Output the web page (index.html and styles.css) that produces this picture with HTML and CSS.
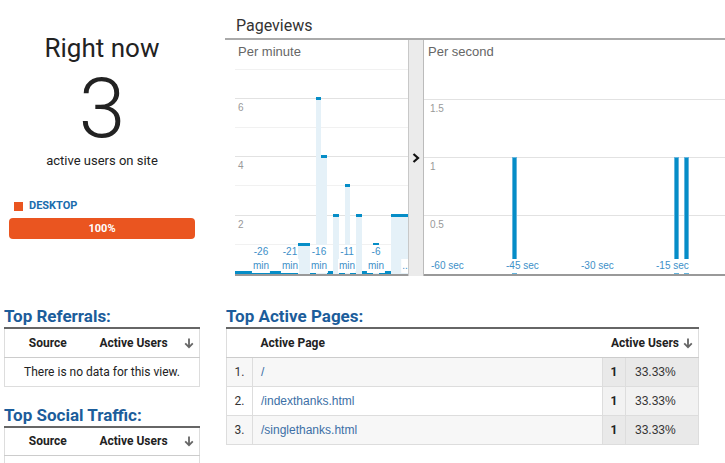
FILE: index.html
```html
<!DOCTYPE html>
<html>
<head>
<meta charset="utf-8">
<link rel="stylesheet" href="styles.css">
</head>
<body>
<div class="page">
  <div class="top">
    <div class="now">
      <div class="now-head">
        <div class="now-title">Right now</div>
        <div class="now-count">3</div>
        <div class="now-sub">active users on site</div>
      </div>
      <div class="legend"><span class="swatch"></span>DESKTOP</div>
      <div class="devbar">100%</div>
    </div>
    <div class="pv">
      <div class="pv-title">Pageviews</div>
      <div class="charts">
        <div class="chart minute">
          <div class="gl minor" style="bottom:29px"></div>
          <div class="gl" style="bottom:58px"><span>2</span></div>
          <div class="gl minor" style="bottom:88px"></div>
          <div class="gl" style="bottom:117px"><span>4</span></div>
          <div class="gl minor" style="bottom:146px"></div>
          <div class="gl" style="bottom:175px"><span>6</span></div>
          <div class="gl minor" style="bottom:204px"></div>
          <div class="chart-label">Per minute</div>
          <div class="bars">
            <div class="bar" style="height:3px"></div>
            <div class="bar" style="height:3px"></div>
            <div class="bar" style="height:3px"></div>
            <div class="bar" style="height:3px"></div>
            <div class="bar" style="height:3px"></div>
            <div class="bar" style="height:3px"></div>
            <div class="bar" style="height:3px"></div>
            <div class="bar" style="height:3px"></div>
            <div class="bar" style="height:3px"></div>
            <div class="bar" style="height:3px"></div>
            <div class="bar" style="height:3px"></div>
            <div class="bar" style="height:31px"></div>
            <div class="bar" style="height:31px"></div>
            <div class="bar" style="height:3px"></div>
            <div class="bar" style="height:177px"></div>
            <div class="bar" style="height:119px"></div>
            <div class="bar" style="height:3px"></div>
            <div class="bar" style="height:60px"></div>
            <div class="bar" style="height:3px"></div>
            <div class="bar" style="height:90px"></div>
            <div class="bar" style="height:3px"></div>
            <div class="bar" style="height:60px"></div>
            <div class="bar" style="height:3px"></div>
            <div class="bar" style="height:3px"></div>
            <div class="bar" style="height:31px"></div>
            <div class="bar" style="height:3px"></div>
            <div class="bar" style="height:3px"></div>
            <div class="bar" style="height:60px"></div>
            <div class="bar" style="height:60px"></div>
            <div class="bar" style="height:60px"></div>
          </div>
          <div class="xl" style="left:26px"><span>-26</span><span>min</span></div>
          <div class="xl" style="left:55px"><span>-21</span><span>min</span></div>
          <div class="xl" style="left:84px"><span>-16</span><span>min</span></div>
          <div class="xl" style="left:112px"><span>-11</span><span>min</span></div>
          <div class="xl" style="left:141px"><span>-6</span><span>min</span></div>
          <div class="xl" style="left:170px"><span>..</span></div>
        </div>
        <div class="sep">
          <svg width="8" height="10" viewBox="0 0 8 10"><polyline points="1.5,1 6,5 1.5,9" fill="none" stroke="#111" stroke-width="2.2"/></svg>
        </div>
        <div class="chart second">
          <div class="gl" style="bottom:58px"><span>0.5</span></div>
          <div class="gl" style="bottom:116px"><span>1</span></div>
          <div class="gl" style="bottom:174px"><span>1.5</span></div>
          <div class="chart-label">Per second</div>
          <div class="sb" style="left:88px"></div>
          <div class="sb" style="left:250px"></div>
          <div class="sb" style="left:260px"></div>
          <div class="xs" style="left:6px">-60 sec</div>
          <div class="xs" style="left:81px">-45 sec</div>
          <div class="xs" style="left:156px">-30 sec</div>
          <div class="xs" style="left:231px">-15 sec</div>
        </div>
      </div>
    </div>
  </div>

  <div class="bottom">
    <div class="side">
      <h2 class="heading">Top Referrals:</h2>
      <table class="tbl small">
        <tr>
          <th class="c-src">Source</th>
          <th class="c-au">Active Users</th>
          <th class="c-arr"><svg class="arrow" width="12" height="12" viewBox="0 0 12 12"><path d="M6 1.5V10M2.2 6.4L6 10.2 9.8 6.4" fill="none" stroke="#666" stroke-width="1.8"/></svg></th>
        </tr>
        <tr><td colspan="3" class="empty">There is no data for this view.</td></tr>
      </table>
      <h2 class="heading gap">Top Social Traffic:</h2>
      <table class="tbl small">
        <tr>
          <th class="c-src">Source</th>
          <th class="c-au">Active Users</th>
          <th class="c-arr"><svg class="arrow" width="12" height="12" viewBox="0 0 12 12"><path d="M6 1.5V10M2.2 6.4L6 10.2 9.8 6.4" fill="none" stroke="#666" stroke-width="1.8"/></svg></th>
        </tr>
        <tr><td colspan="3" class="empty">There is no data for this view.</td></tr>
      </table>
    </div>
    <div class="main">
      <h2 class="heading">Top Active Pages:</h2>
      <table class="tbl pages">
        <tr>
          <th class="idx"></th>
          <th class="pg">Active Page</th>
          <th colspan="2" class="au">Active Users <svg class="arrow" width="12" height="12" viewBox="0 0 12 12"><path d="M6 1.5V10M2.2 6.4L6 10.2 9.8 6.4" fill="none" stroke="#666" stroke-width="1.8"/></svg></th>
        </tr>
        <tr class="odd">
          <td class="idx">1.</td>
          <td class="pg"><span class="link">/</span></td>
          <td class="n">1</td>
          <td class="pct">33.33%</td>
        </tr>
        <tr>
          <td class="idx">2.</td>
          <td class="pg"><span class="link">/indexthanks.html</span></td>
          <td class="n">1</td>
          <td class="pct">33.33%</td>
        </tr>
        <tr class="odd">
          <td class="idx">3.</td>
          <td class="pg"><span class="link">/singlethanks.html</span></td>
          <td class="n">1</td>
          <td class="pct">33.33%</td>
        </tr>
      </table>
    </div>
  </div>
</div>
</body>
</html>
```

FILE: styles.css
```css
* { box-sizing: border-box; }
body {
  margin: 0;
  font-family: Roboto, "Liberation Sans", sans-serif;
  color: #222;
  background: #fff;
}
.page { width: 725px; height: 463px; overflow: hidden; }

.top { display: flex; height: 276px; }

.now { width: 225px; flex: none; }
.now-head { width: 204px; text-align: center; padding-top: 33px; }
.now-title { font-size: 26px; line-height: 30px; color: #222; }
.now-count { font-size: 84px; line-height: 82px; font-weight: 300; margin-top: 5px; color: #222; }
.now-sub { font-size: 13px; line-height: 16px; margin-top: 3px; color: #222; }
.legend {
  display: flex; align-items: center; gap: 6px;
  margin: 30px 0 0 14px;
  font-size: 11px; font-weight: 700; line-height: 14px; color: #1a6cad;
}
.swatch { width: 9px; height: 9px; background: #ea5520; }
.devbar {
  margin: 5px 30px 0 9px; height: 21px; line-height: 21px;
  background: #ea5520; border-radius: 4px;
  color: #fff; font-size: 11px; font-weight: 700; text-align: center;
}

.pv { flex: 1; min-width: 0; }
.pv-title { font-size: 16px; line-height: 20px; padding: 16px 0 0 11px; margin-bottom: 2px; color: #333; }
.charts { display: flex; border-top: 2px solid #aaa; padding-left: 10px; height: 238px; }

.chart { position: relative; height: 236px; border-bottom: 2px solid #999; overflow: hidden; }
.minute { width: 173px; flex: none; }
.second { flex: 1; }
.sep {
  width: 16px; flex: none; height: 236px;
  background: #ebebeb; border-left: 1px solid #c8c8c8; border-right: 1px solid #bbb;
  display: flex; align-items: center; justify-content: center;
}

.chart-label {
  position: absolute; top: 4px; left: 3px;
  font: 13px/15px "Liberation Sans", Arial, sans-serif; color: #666;
}
.second .chart-label { left: 4px; }

.gl { position: absolute; left: 0; right: 0; height: 1px; background: #e2e2e2; }
.gl.minor { background: #f1f1f1; }
.gl span {
  position: absolute; left: 3px; top: 4px;
  font: 10px/11px "Liberation Sans", Arial, sans-serif; color: #999;
}
.second .gl span { left: 6px; }

.bars { position: absolute; left: 0; right: 0; top: 0; bottom: 0; display: flex; align-items: flex-end; }
.bar { flex: 1; background: #e5f1f8; border-top: 3px solid #058dc7; }

.xl {
  position: absolute; bottom: 1px; transform: translateX(-50%);
  font: 10px/14px "Liberation Sans", Arial, sans-serif; color: #3d8fc8; text-align: center;
}
.xl span { display: block; width: fit-content; margin: 0 auto; background: #fff; padding: 0 1px; }

.sb {
  position: absolute; bottom: 0; width: 5px; height: 117px;
  background: #058dc7; border: 1px solid #64b4dd;
}
.xs {
  position: absolute; bottom: 1px;
  font: 10px/14px "Liberation Sans", Arial, sans-serif; color: #3d8fc8;
  background: #fff; padding: 0 1px;
}

.bottom { display: flex; gap: 26px; padding-left: 4px; margin-top: 30px; }
.side { width: 196px; flex: none; }
.main { width: 473px; flex: none; }

.heading {
  margin: 0; font-size: 17px; font-weight: 700; line-height: 21px;
  color: #1c5d9b; border-bottom: 2px solid #666;
}
.heading.gap { margin-top: 18px; }

.tbl {
  width: 100%; border-collapse: collapse; border: 1px solid #ddd; border-top: none;
  font-size: 12px;
}
.tbl th {
  height: 28px; padding: 0; font-weight: 700; color: #222;
  border-bottom: 1px solid #ccc; vertical-align: middle;
}
.tbl td { height: 29px; padding: 0; border-bottom: 1px solid #ddd; vertical-align: middle; }
.arrow { vertical-align: -2px; }

.small .c-src { width: 86px; text-align: center; }
.small .c-au { width: 86px; text-align: center; }
.small .c-arr { text-align: center; padding-left: 2px; }
.empty { text-align: center; color: #222; }

.pages .idx { width: 26px; text-align: center; border-right: 1px solid #ddd; color: #333; }
.pages th.idx { border-right: none; }
.pages .pg { text-align: left; padding-left: 8px; }
.pages .au { text-align: right; padding-right: 4px; }
.pages .n { width: 23px; text-align: center; font-weight: 700; border-left: 1px solid #ddd; background: #f2f2f2; }
.pages .pct {
  width: 73px; padding-left: 9px; border-left: 1px solid #ddd; background: #f2f2f2;
  font-family: "Liberation Sans", Arial, sans-serif; color: #333;
}
.pages tr.odd .idx, .pages tr.odd .pg { background: #f7f7f7; }
.pages tr.odd .n, .pages tr.odd .pct { background: #e9e9e9; }
.link { font-family: "Liberation Sans", Arial, sans-serif; color: #3c6fa6; }
```
